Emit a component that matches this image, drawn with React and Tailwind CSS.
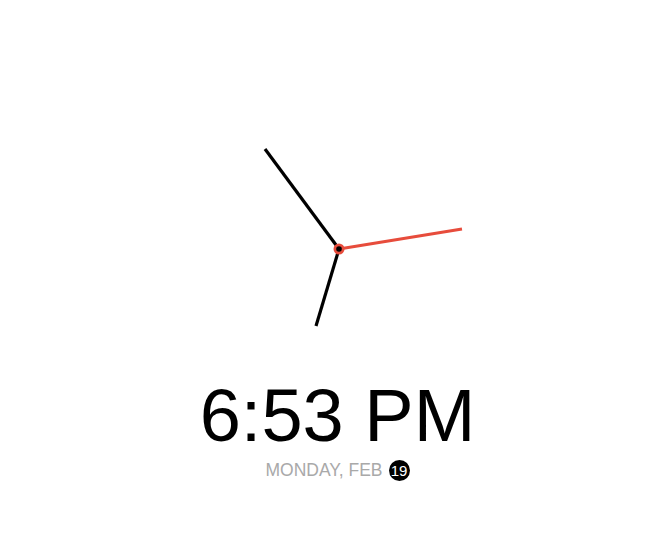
export default function App() {
  const cx = 136, cy = 131;
  return (
    <div className="w-[670px] h-[554px] bg-white flex flex-col items-center pt-[118px] pl-[5px]" style={{ fontFamily: '"Liberation Sans", Arial, sans-serif' }}>
      <svg width="270" height="260" viewBox="0 0 270 260">
        <line x1={cx} y1={cy} x2={cx - 23} y2={cy + 77} stroke="#000" strokeWidth="3.2" strokeLinecap="butt" />
        <line x1={cx} y1={cy} x2={cx - 74} y2={cy - 100} stroke="#000" strokeWidth="3.2" strokeLinecap="butt" />
        <line x1={cx} y1={cy} x2={cx + 123} y2={cy - 20} stroke="#e74c3c" strokeWidth="3" strokeLinecap="butt" />
        <circle cx={cx} cy={cy} r="5.5" fill="#e74c3c" />
        <circle cx={cx} cy={cy} r="2.8" fill="#000" />
      </svg>
      <div className="text-[74px] leading-[76px] text-black">6:53 PM</div>
      <div className="mt-[6px] flex items-center gap-[6px] h-[21px] text-[17.5px] leading-[21px] text-[#a9a9a9]">
        <span>MONDAY, FEB</span>
        <span className="w-[21px] h-[21px] rounded-full bg-black text-white text-[15px] leading-[21px] flex items-center justify-center">19</span>
      </div>
    </div>
  );
}
